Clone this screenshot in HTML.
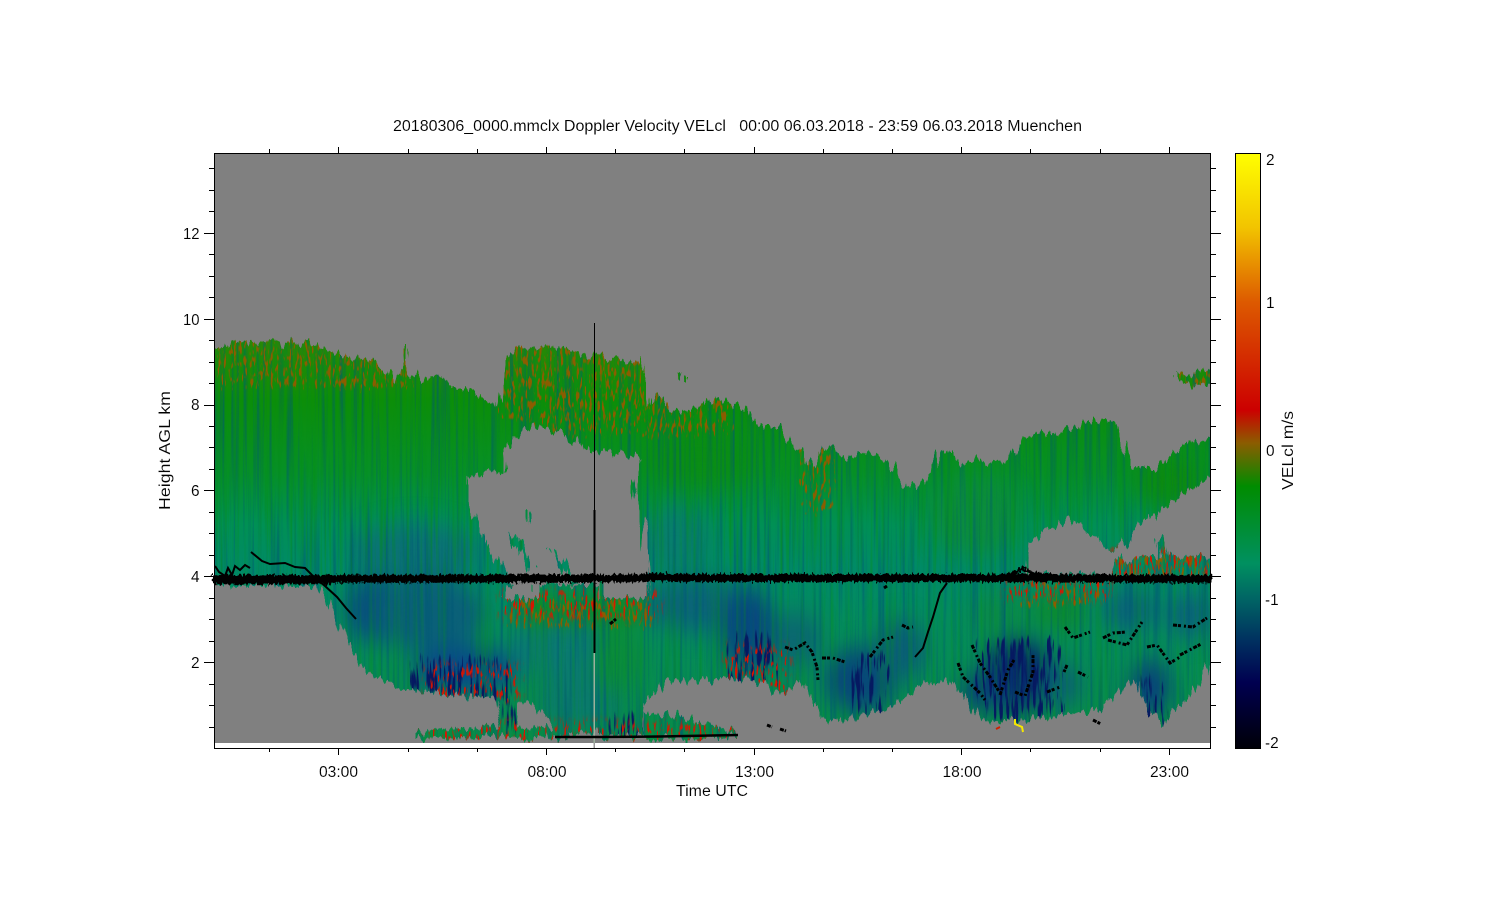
<!DOCTYPE html>
<html lang="en">
<head>
<meta charset="utf-8">
<title>20180306_0000.mmclx Doppler Velocity VELcl</title>
<style>
html,body{margin:0;padding:0;background:#fff;width:1500px;height:900px;overflow:hidden}
svg{display:block}
text{font-family:"Liberation Sans",sans-serif;font-size:15.4px;fill:#000;stroke:#fff;stroke-width:.1px;paint-order:fill stroke}
</style>
</head>
<body>
<svg xmlns="http://www.w3.org/2000/svg" width="1500" height="900" viewBox="0 0 1500 900">
<defs>
<linearGradient id="bar" x1="0" y1="153" x2="0" y2="748" gradientUnits="userSpaceOnUse">
<stop offset="0" stop-color="#ffff00"/>
<stop offset="0.125" stop-color="#f2c400"/>
<stop offset="0.25" stop-color="#dd5a00"/>
<stop offset="0.432" stop-color="#cc0000"/>
<stop offset="0.487" stop-color="#8c5c00"/>
<stop offset="0.56" stop-color="#008c00"/>
<stop offset="0.69" stop-color="#009060"/>
<stop offset="0.75" stop-color="#006464"/>
<stop offset="0.82" stop-color="#003060"/>
<stop offset="0.89" stop-color="#000050"/>
<stop offset="1" stop-color="#000008"/>
</linearGradient>
<linearGradient id="base" x1="0" y1="340" x2="0" y2="740" gradientUnits="userSpaceOnUse">
<stop offset="0" stop-color="#2a8806"/>
<stop offset="0.15" stop-color="#0c8e08"/>
<stop offset="0.33" stop-color="#069026"/>
<stop offset="0.46" stop-color="#009054"/>
<stop offset="0.58" stop-color="#008a68"/>
<stop offset="0.7" stop-color="#048c5c"/>
<stop offset="1" stop-color="#088c48"/>
</linearGradient>
<filter id="blur" filterUnits="userSpaceOnUse" x="150" y="300" width="1120" height="480" color-interpolation-filters="sRGB">
<feGaussianBlur stdDeviation="9 12"/>
</filter>
<filter id="jag" filterUnits="userSpaceOnUse" x="190" y="300" width="1050" height="460" color-interpolation-filters="sRGB">
<feTurbulence type="fractalNoise" baseFrequency="0.2 0.01" numOctaves="3" seed="7" result="n"/>
<feDisplacementMap in="SourceGraphic" in2="n" scale="20" xChannelSelector="A" yChannelSelector="R"/>
</filter>
<filter id="streakDark" filterUnits="userSpaceOnUse" x="214" y="300" width="996" height="443" color-interpolation-filters="sRGB">
<feTurbulence type="fractalNoise" baseFrequency="0.3 0.006" numOctaves="2" seed="11"/>
<feColorMatrix type="matrix" values="0 0 0 0 0  0 0 0 0 0.34  0 0 0 0 0.46  1.7 0 0 0 -0.8"/>
<feComposite operator="in" in2="SourceGraphic"/>
</filter>
<filter id="streakGreen" filterUnits="userSpaceOnUse" x="214" y="300" width="996" height="443" color-interpolation-filters="sRGB">
<feTurbulence type="fractalNoise" baseFrequency="0.3 0.007" numOctaves="2" seed="23"/>
<feColorMatrix type="matrix" values="0 0 0 0 0.02  0 0 0 0 0.56  0 0 0 0 0.1  1.7 0 0 0 -0.8"/>
<feComposite operator="in" in2="SourceGraphic"/>
</filter>
<filter id="speckRed" filterUnits="userSpaceOnUse" x="214" y="300" width="996" height="443" color-interpolation-filters="sRGB">
<feGaussianBlur in="SourceAlpha" stdDeviation="7" result="soft"/>
<feTurbulence type="fractalNoise" baseFrequency="0.38 0.09" numOctaves="2" seed="4"/>
<feColorMatrix type="matrix" values="0 0 0 0 0.55  0 0 0 0 0.36  0 0 0 0 0  1.2 0 0 0 0"/>
<feComposite operator="in" in2="soft"/>
<feComponentTransfer><feFuncA type="linear" slope="7" intercept="-4.5"/></feComponentTransfer>
</filter>
<filter id="speckHot" filterUnits="userSpaceOnUse" x="214" y="300" width="996" height="443" color-interpolation-filters="sRGB">
<feGaussianBlur in="SourceAlpha" stdDeviation="4" result="soft"/>
<feTurbulence type="fractalNoise" baseFrequency="0.42 0.09" numOctaves="2" seed="9"/>
<feColorMatrix type="matrix" values="0 0 0 0 0.85  0 0 0 0 0.08  0 0 0 0 0  10 0 0 0 -5.7"/>
<feComposite operator="in" in2="soft"/>
</filter>
<filter id="speckNavy" filterUnits="userSpaceOnUse" x="214" y="300" width="996" height="443" color-interpolation-filters="sRGB">
<feGaussianBlur in="SourceAlpha" stdDeviation="9" result="soft"/>
<feTurbulence type="fractalNoise" baseFrequency="0.33 0.03" numOctaves="2" seed="15"/>
<feColorMatrix type="matrix" values="0 0 0 0 0.02  0 0 0 0 0.1  0 0 0 0 0.38  1.2 0 0 0 0"/>
<feComposite operator="in" in2="soft"/>
<feComponentTransfer><feFuncA type="linear" slope="7" intercept="-4.1"/></feComponentTransfer>
</filter>
<filter id="band" filterUnits="userSpaceOnUse" x="200" y="550" width="1020" height="60" color-interpolation-filters="sRGB">
<feTurbulence type="fractalNoise" baseFrequency="0.5 0.3" numOctaves="1" seed="2" result="n"/>
<feDisplacementMap in="SourceGraphic" in2="n" scale="8" xChannelSelector="A" yChannelSelector="R"/>
</filter>
<mask id="cloud" maskUnits="userSpaceOnUse" x="214" y="153" width="996" height="590">
<g filter="url(#jag)">
<polygon fill="#fff" points="205,348 225,344 245,342 270,340 285,345 305,344 330,348 350,356 375,363 385,368 395,381 405,353 410,371 420,381 440,375 452,388 470,388 482,399 497,408 503,363 520,349 560,348 585,355 610,358 640,363 647,388 650,405 660,395 672,413 690,411 715,398 745,408 765,428 780,428 800,448 812,468 825,445 850,458 870,453 890,461 905,488 925,481 945,448 955,463 985,461 1005,465 1022,441 1050,433 1070,428 1095,420 1115,423 1130,468 1155,468 1180,450 1220,433 1220,650 1210,660 1195,690 1175,710 1165,725 1150,715 1135,680 1120,690 1095,712 1040,718 985,722 972,708 958,690 945,680 920,685 900,702 880,712 850,718 825,722 815,705 800,680 782,695 760,682 730,678 700,682 665,680 645,705 642,730 600,733 560,733 545,720 535,705 510,700 480,697 450,695 400,688 365,670 345,640 330,605 315,585 205,585"/>
<polygon fill="#000" points="466,476 507,470 505,447 525,426 560,431 590,450 625,455 640,458 632,490 645,530 649,598 505,598 505,585 515,585 505,575 490,552 476,525 466,500"/>
<polygon fill="#000" points="1028,540 1050,530 1070,518 1085,530 1100,540 1118,553 1140,525 1160,510 1190,490 1225,470 1225,556 1180,557 1150,557 1135,555 1125,560 1115,565 1110,575 1025,575"/>
<polygon fill="#fff" points="538,584 600,584 600,598 538,598"/>
<polygon fill="#fff" points="508,534 516,536 534,566 528,570"/>
<polygon fill="#fff" points="552,550 558,552 578,582 570,582"/>
<polygon fill="#fff" points="526,512 532,512 531,524 527,524"/>
<polygon fill="#fff" points="1155,538 1160,538 1164,557 1158,557"/>
<polygon fill="#fff" points="498,698 518,698 516,732 504,732"/>
<polygon fill="#fff" points="412,733 440,730 480,728 530,727 560,731 570,738 412,739"/>
<polygon fill="#fff" points="600,730 605,716 640,715 645,735 600,738"/>
<polygon fill="#fff" points="645,713 680,716 720,728 738,735 738,738 645,738"/>
<polygon fill="#fff" points="1177,374 1195,372 1220,371 1220,386 1195,386 1177,379"/>
<polygon fill="#fff" points="680,372 690,372 688,380 682,380"/>
<polygon fill="#fff" points="402,345 410,345 408,358 403,358"/>
</g>
</mask>
</defs>

<!-- plot area -->
<rect x="214" y="153" width="996" height="590" fill="#808080"/>
<g mask="url(#cloud)">
<rect x="214" y="300" width="996" height="443" fill="url(#base)"/>
<g filter="url(#blur)">
<ellipse cx="415" cy="552" rx="65" ry="28" fill="#0c6c7a" opacity=".8"/>
<ellipse cx="375" cy="610" rx="30" ry="32" fill="#08507c"/>
<ellipse cx="430" cy="615" rx="55" ry="38" fill="#0a6078"/>
<ellipse cx="465" cy="670" rx="52" ry="22" fill="#08488a"/>
<ellipse cx="560" cy="650" rx="55" ry="28" fill="#0a7a72"/>
<ellipse cx="580" cy="700" rx="42" ry="28" fill="#0a7a6c"/>
<rect x="520" y="598" width="125" height="22" fill="#148c14"/>
<ellipse cx="620" cy="660" rx="26" ry="34" fill="#0a8c3c"/>
<ellipse cx="700" cy="605" rx="55" ry="26" fill="#0a6478"/>
<ellipse cx="748" cy="630" rx="26" ry="42" fill="#084680"/>
<ellipse cx="795" cy="640" rx="26" ry="28" fill="#0a6870"/>
<ellipse cx="675" cy="540" rx="35" ry="32" fill="#0a7a72" opacity=".75"/>
<ellipse cx="860" cy="680" rx="35" ry="32" fill="#084878"/>
<ellipse cx="900" cy="650" rx="26" ry="30" fill="#0a6074"/>
<ellipse cx="1018" cy="675" rx="36" ry="34" fill="#06246c"/>
<ellipse cx="985" cy="692" rx="24" ry="18" fill="#083c78"/>
<ellipse cx="1060" cy="685" rx="22" ry="22" fill="#0a6270"/>
<ellipse cx="1150" cy="688" rx="20" ry="28" fill="#084478"/>
<ellipse cx="1130" cy="610" rx="28" ry="20" fill="#0a6478"/>
<ellipse cx="1190" cy="615" rx="24" ry="22" fill="#0a6478"/>
<ellipse cx="975" cy="515" rx="45" ry="40" fill="#0c8c38" opacity=".8"/>
<ellipse cx="1060" cy="612" rx="28" ry="18" fill="#0c8a30"/>
<ellipse cx="1000" cy="615" rx="30" ry="22" fill="#0a8a4a"/>
<ellipse cx="700" cy="460" rx="60" ry="28" fill="#0c8c10" opacity=".7"/>
<ellipse cx="1170" cy="480" rx="35" ry="25" fill="#0c8a10"/>
</g>
<g filter="url(#streakDark)"><rect x="214" y="300" width="996" height="443"/></g>
<g filter="url(#streakGreen)"><rect x="214" y="300" width="996" height="275"/></g>
<g opacity=".6" filter="url(#streakGreen)"><rect x="214" y="575" width="996" height="168"/></g>
<!-- dark navy vertical streak zones -->
<g filter="url(#speckNavy)">
<polygon points="400,648 520,650 530,745 490,745 485,712 405,700"/>
<polygon points="720,625 785,625 785,700 720,695"/>
<polygon points="840,645 905,645 890,725 845,725"/>
<polygon points="965,630 1070,630 1070,730 975,730"/>
<polygon points="1130,665 1175,665 1175,738 1135,738"/>
<polygon points="590,705 650,705 650,750 590,750"/>
</g>
<!-- brown speckle at the tops -->
<g filter="url(#speckRed)">
<polygon points="200,320 310,320 420,345 420,400 300,395 200,395"/>
<polygon points="490,325 650,340 650,440 560,445 490,420"/>
<polygon points="640,380 740,375 740,440 640,445"/>
<polygon points="790,435 840,430 840,520 795,520"/>
<polygon points="500,590 660,590 660,635 500,635"/>
<polygon points="1105,540 1225,540 1225,585 1105,585"/>
<polygon points="1010,575 1110,575 1110,615 1010,615"/>
<polygon points="1165,360 1225,360 1225,398 1165,398"/>
</g>
<g filter="url(#speckHot)">
<polygon points="500,590 660,590 660,618 500,618"/>
<polygon points="405,722 745,722 745,750 405,750"/>
<polygon points="1110,548 1225,548 1225,578 1110,578"/>
<polygon points="725,645 790,645 790,700 725,700"/>
<polygon points="425,665 520,665 520,702 425,702"/>
<polygon points="1005,578 1110,578 1110,600 1005,600"/>
</g>
</g>
<!-- light trace below the vertical line -->
<rect x="593.5" y="653" width="1.5" height="95" fill="#9cb09c"/>

<!-- black overlays -->
<g fill="none" stroke="#000">
<g filter="url(#band)">
<polyline stroke-width="8" points="212,579 600,578.5 640,578 650,577 700,578 1000,578 1212,579"/>
<polyline stroke-width="3" points="1000,576 1015,573 1023,568 1032,573 1048,575 1062,576"/>
<polyline stroke-width="2.5" points="214,583 330,583"/>
</g>
<polyline stroke-width="2" points="215,566 219,572 225,576 228,568 232,575 235,566 240,570 245,565 250,568"/>
<polyline stroke-width="2" points="251,552 262,561 270,564 285,563 295,567 305,568 312,575 325,586 337,597 346,608 356,619"/>
<line x1="594.5" y1="323" x2="594.5" y2="510" stroke-width="1"/>
<line x1="594.5" y1="510" x2="594.5" y2="653" stroke-width="2"/>
<polyline stroke-width="2.5" points="555,737 600,737 660,736.5 738,735"/>
<g stroke-width="3" stroke-dasharray="4 1 3 3 2 2">
<polyline points="785,647 793,650 805,643 812,652 817,667 818,680"/>
<polyline points="822,658 833,658 845,662"/>
<polyline points="870,657 883,640 893,637"/>
<polyline points="902,625 908,628 913,627"/>
<polyline stroke-dasharray="none" stroke-width="2" points="915,657 923,648 928,632 933,617 940,593 947,583"/>
<polyline points="972,645 980,663 990,677 1000,693"/>
<polyline points="958,663 963,677 980,693 985,700"/>
<polyline points="1000,695 1008,670 1014,660"/>
<polyline points="1015,692 1025,696 1033,672 1033,653"/>
<polyline points="1047,692 1060,687"/>
<polyline points="1067,665 1064,672"/>
<polyline points="1078,672 1088,677"/>
<polyline points="1065,627 1073,638 1090,632"/>
<polyline points="1103,638 1113,633 1127,632"/>
<polyline points="1108,640 1127,645 1142,622"/>
<polyline points="1147,647 1157,645 1170,663 1180,657"/>
<polyline points="1173,625 1193,627 1207,618"/>
<polyline points="1180,655 1203,643"/>
<polyline points="1093,720 1101,724"/>
<polyline points="767,725 772,727"/>
<polyline points="780,729 786,731"/>
<polyline points="610,624 616,619"/>
<polyline points="884,588 887,586"/>
</g>
</g>
<g fill="none" stroke-width="2">
<polyline stroke="#f5e800" points="1015,719 1015,724 1022,727 1023,732"/>
<polyline stroke="#cc2200" points="996,729 1000,727"/>
</g>

<!-- white gap and frame -->
<rect x="214" y="743" width="996" height="5" fill="#fff"/>
<rect x="593.5" y="743" width="1.5" height="5" fill="#9a9a9a"/>
<rect x="214.5" y="153.5" width="996" height="595" fill="none" stroke="#000" stroke-width="1"/>

<!-- ticks -->
<path fill="none" stroke="#000" stroke-width="1" d="
M338.5 153V147M546.5 153V147M754.5 153V147M961.5 153V147M1169.5 153V147
M269.5 153V149M408.5 153V149M477.5 153V149M615.5 153V149M684.5 153V149M823.5 153V149M892.5 153V149M1030.5 153V149M1100.5 153V149
M338.5 748V755M546.5 748V755M754.5 748V755M961.5 748V755M1169.5 748V755
M269.5 748V752M408.5 748V752M477.5 748V752M615.5 748V752M684.5 748V752M823.5 748V752M892.5 748V752M1030.5 748V752M1100.5 748V752
M204 233.5H214M204 319.5H214M204 405.5H214M204 490.5H214M204 576.5H214M204 662.5H214
M209 168.5H214M209 190.5H214M209 211.5H214M209 254.5H214M209 276.5H214M209 297.5H214M209 340.5H214M209 362.5H214M209 383.5H214M209 426.5H214M209 447.5H214M209 469.5H214M209 512.5H214M209 533.5H214M209 555.5H214M209 598.5H214M209 619.5H214M209 641.5H214M209 684.5H214M209 705.5H214M209 727.5H214
M1211 233.5H1221M1211 319.5H1221M1211 405.5H1221M1211 490.5H1221M1211 576.5H1221M1211 662.5H1221
M1211 168.5H1216M1211 190.5H1216M1211 211.5H1216M1211 254.5H1216M1211 276.5H1216M1211 297.5H1216M1211 340.5H1216M1211 362.5H1216M1211 383.5H1216M1211 426.5H1216M1211 447.5H1216M1211 469.5H1216M1211 512.5H1216M1211 533.5H1216M1211 555.5H1216M1211 598.5H1216M1211 619.5H1216M1211 641.5H1216M1211 684.5H1216M1211 705.5H1216M1211 727.5H1216"/>

<!-- colour bar -->
<rect x="1235.5" y="153.5" width="25" height="595" fill="url(#bar)" stroke="#000" stroke-width="1"/>

<!-- text -->
<text x="393" y="131" textLength="689" lengthAdjust="spacingAndGlyphs" xml:space="preserve" style="white-space:pre">20180306_0000.mmclx Doppler Velocity VELcl   00:00 06.03.2018 - 23:59 06.03.2018 Muenchen</text>

<text x="183" y="239" textLength="16.5" lengthAdjust="spacingAndGlyphs">12</text>
<text x="183" y="325" textLength="16.5" lengthAdjust="spacingAndGlyphs">10</text>
<text x="191" y="410">8</text>
<text x="191" y="496">6</text>
<text x="191" y="582">4</text>
<text x="191" y="668">2</text>

<text x="319" y="777" textLength="39" lengthAdjust="spacingAndGlyphs">03:00</text>
<text x="527.5" y="777" textLength="39" lengthAdjust="spacingAndGlyphs">08:00</text>
<text x="735" y="777" textLength="39" lengthAdjust="spacingAndGlyphs">13:00</text>
<text x="942.5" y="777" textLength="39" lengthAdjust="spacingAndGlyphs">18:00</text>
<text x="1150" y="777" textLength="39" lengthAdjust="spacingAndGlyphs">23:00</text>
<text x="676" y="796" textLength="72" lengthAdjust="spacingAndGlyphs">Time UTC</text>

<text transform="translate(170 510) rotate(-90)" textLength="119" lengthAdjust="spacingAndGlyphs">Height AGL km</text>
<text transform="translate(1293 490) rotate(-90)" textLength="79" lengthAdjust="spacingAndGlyphs">VELcl m/s</text>

<text x="1266" y="165">2</text>
<text x="1266" y="308">1</text>
<text x="1266" y="456">0</text>
<text x="1265" y="605">-1</text>
<text x="1265" y="748">-2</text>
</svg>
</body>
</html>
